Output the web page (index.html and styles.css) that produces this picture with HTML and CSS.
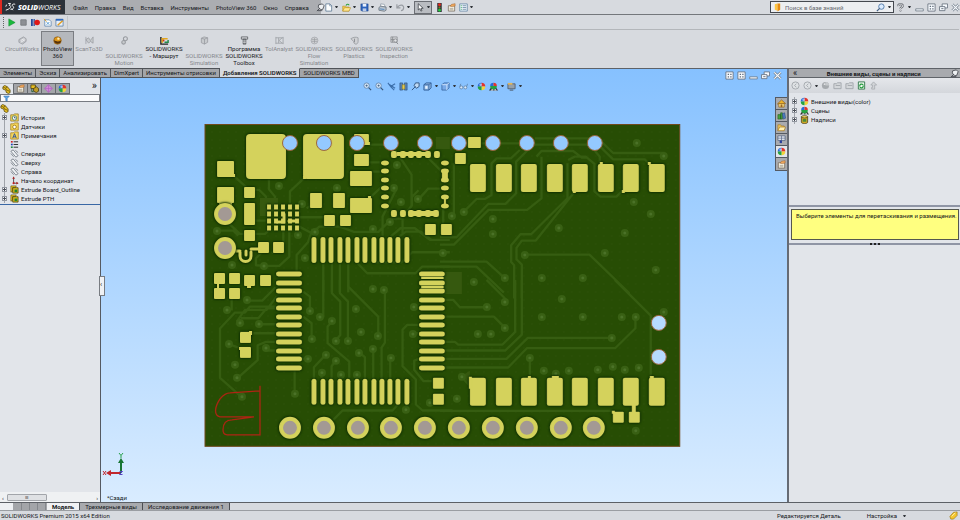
FILE: index.html
```
<!DOCTYPE html>
<html lang="ru">
<head>
<meta charset="utf-8">
<title>SOLIDWORKS</title>
<link rel="stylesheet" href="styles.css">
</head>
<body>
<svg class="sprite" aria-hidden="true">
  <symbol id="play" viewBox="0 0 10 10"><path d="M2 1l7 4-7 4z" fill="#18b83a" stroke="#0c8a2a" stroke-width=".6"/></symbol>
  <symbol id="stop" viewBox="0 0 10 10"><path d="M2 2h6v6H2z" fill="#8c8f94" stroke="#777a80"/></symbol>
  <symbol id="rec" viewBox="0 0 10 10"><path d="M0 1h2v8H0zM2.800 1h1.400v8H2.800z" fill="#254a9c"/><circle cx="6.800" cy="5" r="3.100" fill="#e01818"/></symbol>
  <symbol id="macro-new" viewBox="0 0 10 10"><path d="M2 2h5l2 2v5H2z" fill="#fff" stroke="#4c7aa8" stroke-width=".8"/><path d="M4 4.500l3 3M7 4.500l-3 3" stroke="#4793d0"/><path d="M1 1l3 3" stroke="#e0a020"/></symbol>
  <symbol id="macro-edit" viewBox="0 0 10 10"><path d="M1 1.500h8v7.500H1z" fill="#e8f0fa" stroke="#52759e" stroke-width=".8"/><path d="M1 1h8v2H1z" fill="#2f6bbf"/><path d="M3 8l5.500-5" stroke="#e39b1c" stroke-width="1.600"/></symbol>
  <symbol id="page" viewBox="0 0 10 10"><path d="M2 1h4.500L8.500 3v6H2z" fill="#fdfefe" stroke="#52708d" stroke-width=".8"/><path d="M6.300 1v2.200h2.200" fill="none" stroke="#52708d" stroke-width=".6"/></symbol>
  <symbol id="open" viewBox="0 0 10 10"><path d="M.8 9V3.500h3l1 1h3V9z" fill="#f4cd52" stroke="#b48716" stroke-width=".6"/><path d="M.8 9l2-3.800h6.800L7.800 9z" fill="#ffe791" stroke="#b48716" stroke-width=".6"/><path d="M4.500 3C5 1 7 1 8 2.500" fill="none" stroke="#2ba13c" stroke-width="1.200"/></symbol>
  <symbol id="save" viewBox="0 0 10 10"><path d="M1 1h8v8H2L1 8z" fill="#2c63bd" stroke="#1c4388" stroke-width=".6"/><path d="M3 1h4v3H3z" fill="#e9f0fc"/><path d="M3 6h4v3H3z" fill="#bccbe6"/></symbol>
  <symbol id="print" viewBox="0 0 10 10"><path d="M3 1l4 .5 1 3-5-.5z" fill="#fff" stroke="#6a7b8c" stroke-width=".6"/><path d="M1 5l2-1.500 6 1V8L7 9.200 1 8z" fill="#b8c2cc" stroke="#56616d" stroke-width=".7"/><path d="M2 6.500l5 .7" stroke="#3379c0" stroke-width=".8"/></symbol>
  <symbol id="undo" viewBox="0 0 10 10"><path d="M1 1.500v4h4M1.500 5C4 1 9 2 8.500 5.500c-.3 2-2 3-3 3" fill="none" stroke="#989ca2" stroke-width="1.300"/></symbol>
  <symbol id="cursor" viewBox="0 0 10 10"><path d="M2.500.8v7l1.800-1.500L5.500 9l1.200-.6-1.200-2.500H8z" fill="#fff" stroke="#30343a" stroke-width=".8"/></symbol>
  <symbol id="light" viewBox="0 0 10 10"><path d="M2.500 0h5v10h-5z" fill="#30343a"/><circle cx="5" cy="2" r="1.600" fill="#e32b22"/><circle cx="5" cy="5" r="1.200" fill="#8b7a19"/><circle cx="5" cy="8" r="1.600" fill="#22c63b"/></symbol>
  <symbol id="props" viewBox="0 0 10 10"><path d="M1.500 3h7v6h-7z" fill="#f4f0e2" stroke="#716657" stroke-width=".8"/><path d="M3 6h4M3 7.500h4" stroke="#857c70" stroke-width=".6"/><path d="M3.500 3.500l1.500-2 4-.8v2.500L6 4z" fill="#eeaa60" stroke="#9d5a25" stroke-width=".5"/></symbol>
  <symbol id="options" viewBox="0 0 10 10"><path d="M.8 1h8.400v8H.8z" fill="#edf5fb" stroke="#577d9f" stroke-width=".8"/><path d="M4 3h4M4 5h4M4 7h4" stroke="#47698a" stroke-width=".7"/><path d="M2 3h1M2 5h1M2 7h1" stroke="#25a348"/></symbol>
  <symbol id="pin" viewBox="0 0 10 10"><path d="M3 2l4-1 2 2-1.500 4-2 .5L2.500 4.500z" fill="#eef0f2" stroke="#30343a" stroke-width=".8"/><path d="M1 9l3-3M2 8.500h5" stroke="#30343a" stroke-width=".8"/></symbol>
  <symbol id="book" viewBox="0 0 10 10"><path d="M2 1.500l3-1v8l-3-1z" fill="#ffc640"/><path d="M5 .5h3v7l-3 2z" fill="#e58b12"/></symbol>
  <symbol id="lens" viewBox="0 0 10 10"><circle cx="6" cy="4" r="3" fill="#dcecff" stroke="#4f78a8"/><path d="M4 6L1 9" stroke="#435f83" stroke-width="1.400"/></symbol>
  <symbol id="help" viewBox="0 0 10 10"><path d="M2.500 3.500C2 .5 8 .5 7.500 3.500 7.200 5 5 4.500 5 6.500" fill="none" stroke="#62676f" stroke-width="2.400"/><path d="M2.500 3.500C2 .5 8 .5 7.500 3.500 7.200 5 5 4.500 5 6.500" fill="none" stroke="#fff" stroke-width=".9"/><circle cx="5" cy="8.500" r=".9" fill="#fff" stroke="#62676f" stroke-width=".6"/></symbol>
  <symbol id="w-min" viewBox="0 0 10 10"><path d="M.8 6.500h8.400v2.300H.8z" fill="#f6fafe" stroke="#626c79" stroke-width=".8"/></symbol>
  <symbol id="w-tile" viewBox="0 0 10 10"><path d="M1 1h8v8H1z" fill="#f6fafe" stroke="#626c79" stroke-width=".9"/><path d="M3 3h1.500v1.500H3zM5.800 3h1.500v1.500H5.800zM3 5.800h1.500v1.500H3zM5.800 5.800h1.500v1.500H5.800z" fill="#626c79"/></symbol>
  <symbol id="w-restore" viewBox="0 0 10 10"><path d="M3.500 1h6v4.500h-6z" fill="#f6fafe" stroke="#626c79" stroke-width=".9"/><path d="M.6 4h6v4.500h-6z" fill="#f6fafe" stroke="#626c79" stroke-width=".9"/><path d="M2.500 6.300h2.500" stroke="#626c79"/></symbol>
  <symbol id="w-close" viewBox="0 0 10 10"><path d="M1.500 1.500l7 7M8.500 1.500l-7 7" stroke="#727c89" stroke-width="2.800"/><path d="M1.500 1.500l7 7M8.500 1.500l-7 7" stroke="#f6fafe" stroke-width="1.400"/></symbol>
  <symbol id="ball" viewBox="0 0 10 10"><path d="M5 5V.8A4.200 4.200 0 0 0 .8 5z" fill="#2869d8"/><path d="M5 5V.8A4.200 4.200 0 0 1 9.200 5z" fill="#e2342c"/><path d="M5 5v4.200A4.200 4.200 0 0 0 9.200 5z" fill="#f1d438"/><path d="M5 5v4.200A4.200 4.200 0 0 1 .8 5z" fill="#25a241"/><circle cx="4" cy="3" r="1.400" fill="#fff" opacity=".55"/></symbol>
  <symbol id="ball-scene" viewBox="0 0 10 10"><path d="M0 9.500l2-3h6l2 3z" fill="#333"/><path d="M2 9.500l1-1.500h2l-.5 1.500zM6 9.500V8h1.500l1 1.500z" fill="#eee"/><path d="M5 4.500V.8A3.700 3.700 0 0 0 1.300 4.500z" fill="#2869d8"/><path d="M5 4.500V.8a3.700 3.700 0 0 1 3.700 3.700z" fill="#e2342c"/><path d="M1.300 4.500a3.700 3.700 0 0 0 7.400 0z" fill="#25a241"/></symbol>
  <symbol id="decal" viewBox="0 0 10 10"><path d="M1.500 2v6c0 2 7 2 7 0V2z" fill="#d4a925" stroke="#3e3412" stroke-width=".8"/><ellipse cx="5" cy="2" rx="3.500" ry="1.300" fill="#f7dc63" stroke="#3e3412" stroke-width=".8"/><path d="M3 4.500h4v3H3z" fill="#4b8b38"/></symbol>
  <symbol id="goldball" viewBox="0 0 10 10"><circle cx="5" cy="5" r="4.200" fill="#dd9616" stroke="#744307" stroke-width=".6"/><path d="M1 4.500c3 2 5 2 8 .5-.5 5-7.500 5-8-.5z" fill="#553009"/><circle cx="6" cy="3" r="1.300" fill="#ffeab0"/></symbol>
  <symbol id="g-circuit" viewBox="0 0 10 10"><path d="M1 4l5-3 3 2v3L5 9 1 7z" fill="#bfc2c6" stroke="#94979c" stroke-width=".8"/><path d="M3 5l4-2M3 7l5-3" stroke="#f1f2f4"/></symbol>
  <symbol id="g-scan" viewBox="0 0 10 10"><path d="M1 1v8M1 4l3-2 2 3 3-4v7L6 6 4 8z" fill="#c7cacd" stroke="#989ba0" stroke-width=".8"/></symbol>
  <symbol id="g-motion" viewBox="0 0 10 10"><circle cx="6" cy="3" r="2.200" fill="none" stroke="#989ba0" stroke-width="1.200"/><circle cx="4" cy="7" r="2" fill="#c7cacd" stroke="#989ba0" stroke-width="1.200"/></symbol>
  <symbol id="route" viewBox="0 0 10 10"><path d="M1 1v8h8" fill="none" stroke="#222" stroke-width="1.600"/><path d="M2.500 7.500V3h6" fill="none" stroke="#e3a71e" stroke-width="1.800"/><path d="M5 7h4V4.500" fill="none" stroke="#22894a" stroke-width="1.600"/><circle cx="4" cy="5" r="1" fill="#c93222"/></symbol>
  <symbol id="g-cube" viewBox="0 0 10 10"><path d="M1.500 2.500l3-1.500 4 1v5L5 9 1.500 7.500z" fill="#c7cacd" stroke="#94979c" stroke-width=".8"/><path d="M5 3.500V9M1.500 2.500l3.500 1 3.500-1.500" fill="none" stroke="#94979c" stroke-width=".8"/></symbol>
  <symbol id="bolt" viewBox="0 0 10 10"><path d="M1.500 1h7v2.500h-7z" fill="#d8dade" stroke="#4c4f54" stroke-width=".8"/><path d="M3.500 3.500h3V9h-3z" fill="#8c9095" stroke="#4c4f54" stroke-width=".8"/><path d="M3.500 5.500h3M3.500 7.200h3" stroke="#eee" stroke-width=".6"/></symbol>
  <symbol id="g-tol" viewBox="0 0 10 10"><path d="M1 1v8M9 1v8M1 2h8M1 8h8M4 2v6M8 2L4.500 5 8 8" fill="none" stroke="#a2a5aa"/></symbol>
  <symbol id="g-flow" viewBox="0 0 10 10"><circle cx="5" cy="5" r="3.800" fill="#cfd1d4" stroke="#a2a5aa" stroke-width=".8"/><path d="M2 4h6M2 6h6M5 2v6" stroke="#96999e" stroke-width=".7"/></symbol>
  <symbol id="g-plastic" viewBox="0 0 10 10"><path d="M1 3c3-2 6-2 8-1v4c0 4-5 4-5 0z" fill="#cfd1d4" stroke="#96999e" stroke-width=".9"/><path d="M5 3v4" stroke="#888b90"/></symbol>
  <symbol id="g-inspect" viewBox="0 0 10 10"><path d="M1 1h7v6H1z" fill="#cfd1d4" stroke="#888b90" stroke-width=".8"/><path d="M3 1v6M1 4h7M5 5l4 4" stroke="#888b90"/><circle cx="6" cy="5" r="1.800" fill="#e2e4e6" stroke="#888b90" stroke-width=".8"/></symbol>
  <symbol id="part" viewBox="0 0 10 10"><path d="M1 2l2-1.500L6 2l3 3.500v3L7 9.500 4.500 8V6L1 4.500z" fill="#e5bd22" stroke="#51420a" stroke-width=".8"/><path d="M1.200 2.200L4 3.500l1 2 3.500 1.500M4 3.500L6 2" fill="none" stroke="#51420a" stroke-width=".7"/></symbol>
  <symbol id="tag" viewBox="0 0 10 10"><path d="M1 6l4-4.500 4-.5v4L5 9H2z" fill="#f4c62c" stroke="#9a7412" stroke-width=".7"/><path d="M3 6l4-4" stroke="#fff3b5"/></symbol>
  <symbol id="config" viewBox="0 0 10 10"><path d="M1 1h5v4H1z" fill="#e5bd22" stroke="#3d330d" stroke-width=".8"/><path d="M4 5l3-2 2.500 2v3L7 9.500 4 8z" fill="#bd9b27" stroke="#3d330d" stroke-width=".8"/><path d="M2 5.500v3h2" fill="none" stroke="#235e33"/></symbol>
  <symbol id="dimx" viewBox="0 0 10 10"><path d="M5 .5L7 3l2.500 2L7 7 5 9.500 3 7 .5 5 3 3z" fill="#d28adb" stroke="#b260c2" stroke-width=".8"/><path d="M5 1v8M1 5h8" stroke="#a55fb8" stroke-width=".6"/></symbol>
  <symbol id="filter" viewBox="0 0 10 10"><path d="M1 1.500h8L6 5v4L4 8V5z" fill="#64a9e8" stroke="#2d6bb0" stroke-width=".8"/></symbol>
  <symbol id="history" viewBox="0 0 10 10"><path d="M.8 2h3l1-1h4.400v8H.8z" fill="#f5d65c" stroke="#8f7320" stroke-width=".8"/><circle cx="5" cy="5.500" r="2.500" fill="#eef6ff" stroke="#356f54" stroke-width=".8"/><path d="M5 4v1.500h1.500" fill="none" stroke="#222" stroke-width=".7"/></symbol>
  <symbol id="sensor" viewBox="0 0 10 10"><path d="M.8 2h3l1-1h4.400v8H.8z" fill="#f5d65c" stroke="#a17c16" stroke-width=".8"/><circle cx="5" cy="5.500" r="2" fill="#fff" stroke="#a17c16"/></symbol>
  <symbol id="note" viewBox="0 0 10 10"><path d="M.8 2h3l1-1h4.400v8H.8z" fill="#f5d65c" stroke="#a17c16" stroke-width=".8"/><path d="M3 8l2-5 2 5M3.700 6.500h2.600" fill="none" stroke="#234a9b"/></symbol>
  <symbol id="material" viewBox="0 0 10 10"><path d="M4 2h5M4 5h5M4 8h5" stroke="#222"/><path d="M1 2h2" stroke="#d32222" stroke-width="1.800"/><path d="M1 5h2" stroke="#2343bb" stroke-width="1.800"/><path d="M1 8h2" stroke="#22863d" stroke-width="1.800"/></symbol>
  <symbol id="plane" viewBox="0 0 10 10"><path d="M1 2.500L3.500 1 9 7.500 6.500 9z" fill="#eef1f4" stroke="#626a73" stroke-width=".8"/><path d="M6 1.500l3 2.500M1 5l3 3.500" stroke="#626a73" stroke-width=".8"/></symbol>
  <symbol id="origin" viewBox="0 0 10 10"><path d="M4 1v7h5" fill="none" stroke="#333" stroke-width=".9"/><path d="M2.500 3L4 .5 5.500 3zM7 6.500L9.500 8 7 9.500z" fill="#b02222"/><circle cx="4" cy="8" r="1.200" fill="#c32222"/></symbol>
  <symbol id="extrude" viewBox="0 0 10 10"><path d="M1 1h6l-1 2H3v4L1 8z" fill="#ebc928" stroke="#584b08" stroke-width=".7"/><path d="M3 3h6v6H3z" fill="#d9b91f" stroke="#453b07" stroke-width=".8"/><path d="M5 5h3v3H5z" fill="#23842c"/></symbol>
  <symbol id="zoomfit" viewBox="0 0 10 10"><circle cx="4" cy="4" r="3" fill="#d5e8fb" stroke="#6482a6" stroke-width=".9"/><path d="M6.300 6.300L9 9" stroke="#355578" stroke-width="1.300"/><path d="M2.800 4h2.400M4 2.800v2.400" stroke="#355578" stroke-width=".8"/></symbol>
  <symbol id="prev" viewBox="0 0 10 10"><path d="M1 1l3 4 5-3M4 5l4 4M3 3l6 4" fill="none" stroke="#3c6fab" stroke-width="1.200"/></symbol>
  <symbol id="section" viewBox="0 0 10 10"><path d="M1 1h3v8H1zM6 1h3v8H6z" fill="#5684bb" stroke="#2d4f79" stroke-width=".7"/><path d="M3.500 3h3v5h-3z" fill="#e6cb50" stroke="#796a21" stroke-width=".6"/></symbol>
  <symbol id="annot" viewBox="0 0 10 10"><path d="M1 9l4-4M5 1h4v4L6 7 3.500 4z" fill="#c0daf4" stroke="#30517a"/></symbol>
  <symbol id="cube" viewBox="0 0 10 10"><path d="M1 3l2.500-2H9v5.500L6.500 9H1z" fill="#7aaae8" stroke="#315e98" stroke-width=".8"/><path d="M1 3h5.500v6M6.500 3L9 1" fill="none" stroke="#e8f3ff" stroke-width=".8"/></symbol>
  <symbol id="orient" viewBox="0 0 10 10"><path d="M1 3l2.500-2H9v5.500L6.500 9H1z" fill="#8db4e0" stroke="#315e98"/><path d="M1 3h5.500v6M6.500 3L9 1" fill="none" stroke="#315e98" stroke-width=".8"/><path d="M2.500 4.500h2.500v3H2.500z" fill="#e8f3ff"/></symbol>
  <symbol id="glasses" viewBox="0 0 10 10"><circle cx="2.500" cy="6" r="1.700" fill="#d6e9fc" stroke="#567799" stroke-width=".8"/><circle cx="7" cy="6" r="1.700" fill="#d6e9fc" stroke="#567799" stroke-width=".8"/><path d="M1 5l1-3M8.500 5l1-3" stroke="#567799" stroke-width=".8"/></symbol>
  <symbol id="screen" viewBox="0 0 10 10"><path d="M1 2h8v5.500H1z" fill="#95a0ab" stroke="#454e59" stroke-width=".8"/><path d="M1 1h5v2H1z" fill="#e3b65a"/><path d="M3 9h4" stroke="#454e59"/></symbol>
  <symbol id="home" viewBox="0 0 10 10"><path d="M.5 5.500L5 1l4.500 4z" fill="#eeb32a" stroke="#8c5c13" stroke-width=".7"/><path d="M2 5h6v4H2z" fill="#f9dc80" stroke="#8c5c13" stroke-width=".7"/><path d="M4 6h2v3H4z" fill="#9a6321"/></symbol>
  <symbol id="library" viewBox="0 0 10 10"><path d="M1 4h3v5H1zM4 2h2v7H4z" fill="#46a03d" stroke="#225c23" stroke-width=".6"/><path d="M6 3l2.500-1L9.500 8 7 9z" fill="#4f7fc3" stroke="#234478" stroke-width=".6"/></symbol>
  <symbol id="folder" viewBox="0 0 10 10"><path d="M1 8.500V2h3l1 1.300h3v5.200z" fill="#eec75c" stroke="#a37622" stroke-width=".7"/><path d="M1 8.500L3 4.500h6.500l-1.700 4z" fill="#fff0b0" stroke="#a37622" stroke-width=".7"/></symbol>
  <symbol id="palette" viewBox="0 0 10 10"><path d="M1 1h8v5H1z" fill="#e8edf5" stroke="#4d5d7c" stroke-width=".8"/><path d="M5 1v5M1 3.500h8" stroke="#4d5d7c" stroke-width=".7"/><path d="M3 6h2.500v3H3z" fill="#283e9b"/></symbol>
  <symbol id="g-back" viewBox="0 0 10 10"><circle cx="5" cy="5" r="4" fill="#dfe2e5" stroke="#a2a6ab"/><path d="M6 3L4 5l2 2" fill="none" stroke="#a2a6ab"/></symbol>
  <symbol id="g-folder" viewBox="0 0 10 10"><path d="M1 8.500V3h3l1-1h4v6.500z" fill="#d4d7da" stroke="#a2a6ab"/><path d="M3 5h5" stroke="#a2a6ab"/></symbol>
  <symbol id="g-ball" viewBox="0 0 10 10"><circle cx="5" cy="5" r="4" fill="#a6aaae"/><path d="M5 1a4 4 0 0 1 4 4H5z" fill="#c6c9cc"/><circle cx="4" cy="3.500" r="1" fill="#e0e2e4"/></symbol>
  <symbol id="refresh" viewBox="0 0 10 10"><path d="M1.500 1h7v8h-7z" fill="#f2faf3" stroke="#2f7547"/><path d="M3 6c0-3 2-3 4-2M7 5c0 3-2 3-4 2" fill="none" stroke="#249a3e" stroke-width="1.400"/></symbol>
  <symbol id="g-up" viewBox="0 0 10 10"><path d="M5 1l3.500 3.500H6.300V9H3V7h1V4.500H2z" fill="#d2d5d8" stroke="#a2a6ab" stroke-width=".8"/></symbol>
</svg>

<header class="titlebar">
  <div class="brand"><svg viewBox="0 0 14 11" aria-hidden="true"><path d="M4 1h3L5.500 3.500C9 4 7 8 1 9.500M2 2.500L1 5M13 2c-3-1-5 1-3 2.500s1 4-3 4M8 7.500l2 2" fill="none" stroke="#fff" stroke-width="1.200"/></svg><b>SOLID</b><span>WORKS</span></div>
  <nav class="menu">
    <a href="#">Файл</a><a href="#">Правка</a><a href="#">Вид</a><a href="#">Вставка</a><a href="#">Инструменты</a><a href="#">PhotoView 360</a><a href="#">Окно</a><a href="#">Справка</a>
    <svg class="ico"><use href="#pin"/></svg>
  </nav>
  <div class="quick">
    <button aria-label="Создать"><svg class="ico"><use href="#page"/></svg><i></i></button>
    <button aria-label="Открыть"><svg class="ico"><use href="#open"/></svg><i></i></button>
    <button aria-label="Сохранить"><svg class="ico"><use href="#save"/></svg><i></i></button>
    <button aria-label="Печать"><svg class="ico"><use href="#print"/></svg><i></i></button>
    <button aria-label="Отменить"><svg class="ico"><use href="#undo"/></svg><i></i></button>
    <button class="picked" aria-label="Выбрать"><svg class="ico"><use href="#cursor"/></svg><i></i></button>
    <button aria-label="Перестроить"><svg class="ico"><use href="#light"/></svg></button>
    <button aria-label="Свойства"><svg class="ico"><use href="#props"/></svg></button>
    <button aria-label="Параметры"><svg class="ico"><use href="#options"/></svg><i></i></button>
  </div>
  <div class="search"><svg class="ico"><use href="#book"/></svg><input type="search" aria-label="Поиск" placeholder="Поиск в базе знаний"><button aria-label="Найти"><svg class="ico"><use href="#lens"/></svg><i></i></button></div>
  <div class="window">
    <button aria-label="Справка"><svg class="ico"><use href="#help"/></svg><i></i></button>
    <button aria-label="Свернуть"><svg class="ico"><use href="#w-min"/></svg></button>
    <button aria-label="Мозаика"><svg class="ico"><use href="#w-tile"/></svg></button>
    <button aria-label="Восстановить"><svg class="ico"><use href="#w-restore"/></svg></button>
    <button aria-label="Закрыть"><svg class="ico"><use href="#w-close"/></svg></button>
  </div>
</header>

<div class="macros">
  <button aria-label="Выполнить"><svg class="ico"><use href="#play"/></svg></button>
  <button aria-label="Стоп"><svg class="ico"><use href="#stop"/></svg></button>
  <button aria-label="Запись"><svg class="ico"><use href="#rec"/></svg></button>
  <button aria-label="Новый макрос"><svg class="ico"><use href="#macro-new"/></svg></button>
  <button aria-label="Правка макроса"><svg class="ico"><use href="#macro-edit"/></svg></button>
</div>

<div class="ribbon">
  <button class="wide off"><svg class="ico"><use href="#g-circuit"/></svg>CircuitWorks</button>
  <button class="on"><svg class="ico"><use href="#goldball"/></svg>PhotoView<br>360</button>
  <button class="narrow off"><svg class="ico"><use href="#g-scan"/></svg>ScanTo3D</button>
  <button class="off low"><svg class="ico"><use href="#g-motion"/></svg>SOLIDWORKS<br>Motion</button>
  <button><svg class="ico"><use href="#route"/></svg>SOLIDWORKS<br>- Маршрут</button>
  <button class="off low"><svg class="ico"><use href="#g-cube"/></svg>SOLIDWORKS<br>Simulation</button>
  <button><svg class="ico"><use href="#bolt"/></svg>Программа<br>SOLIDWORKS<br>Toolbox</button>
  <button class="narrow off"><svg class="ico"><use href="#g-tol"/></svg>TolAnalyst</button>
  <button class="off"><svg class="ico"><use href="#g-flow"/></svg>SOLIDWORKS<br>Flow<br>Simulation</button>
  <button class="off"><svg class="ico"><use href="#g-plastic"/></svg>SOLIDWORKS<br>Plastics</button>
  <button class="off"><svg class="ico"><use href="#g-inspect"/></svg>SOLIDWORKS<br>Inspection</button>
</div>

<main class="work">
  <nav class="tabs">
    <button>Элементы</button><button>Эскиз</button><button>Анализировать</button><button>DimXpert</button><button>Инструменты отрисовки</button><button class="active">Добавления SOLIDWORKS</button><button>SOLIDWORKS MBD</button>
  </nav>

  <aside class="features">
    <div class="ftabs">
      <button class="active" aria-label="Дерево"><svg class="ico"><use href="#part"/></svg></button>
      <button aria-label="Свойства"><svg class="ico"><use href="#props"/></svg></button>
      <button aria-label="Конфигурации"><svg class="ico"><use href="#config"/></svg></button>
      <button aria-label="DimXpert"><svg class="ico"><use href="#dimx"/></svg></button>
      <button aria-label="Отображение"><svg class="ico"><use href="#ball"/></svg></button>
      <span>»</span>
    </div>
    <label class="filter"><svg class="ico"><use href="#filter"/></svg><input aria-label="Фильтр"></label>
    <ul class="tree">
      <li class="root"><svg class="ico"><use href="#part"/></svg></li>
      <li><b class="plus"></b><svg class="ico"><use href="#history"/></svg>История</li>
      <li><b></b><svg class="ico"><use href="#sensor"/></svg>Датчики</li>
      <li><b class="plus"></b><svg class="ico"><use href="#note"/></svg>Примечания</li>
      <li><b></b><svg class="ico"><use href="#material"/></svg></li>
      <li><b></b><svg class="ico"><use href="#plane"/></svg>Спереди</li>
      <li><b></b><svg class="ico"><use href="#plane"/></svg>Сверху</li>
      <li><b></b><svg class="ico"><use href="#plane"/></svg>Справа</li>
      <li><b></b><svg class="ico"><use href="#origin"/></svg>Начало координат</li>
      <li><b class="plus"></b><svg class="ico"><use href="#extrude"/></svg>Extrude Board_Outline</li>
      <li><b class="plus"></b><svg class="ico"><use href="#extrude"/></svg>Extrude PTH</li>
    </ul>
    <div class="hscroll"><span>‹</span><div class="thumb">III</div><span>›</span></div>
    <div class="handle">‹</div>
  </aside>

  <section class="viewport">
    <div class="view-head">
      <div class="view-tools">
        <svg class="ico"><use href="#zoomfit"/></svg><svg class="ico"><use href="#zoomfit"/></svg><svg class="ico"><use href="#prev"/></svg><svg class="ico"><use href="#section"/></svg><svg class="ico"><use href="#annot"/></svg><svg class="ico"><use href="#orient"/></svg><i></i><svg class="ico"><use href="#cube"/></svg><i></i><svg class="ico"><use href="#glasses"/></svg><i></i><svg class="ico"><use href="#ball"/></svg><svg class="ico"><use href="#ball-scene"/></svg><i></i><svg class="ico"><use href="#screen"/></svg><i></i>
      </div>
      <div class="view-win">
        <svg class="ico"><use href="#w-tile"/></svg><svg class="ico"><use href="#w-tile"/></svg><svg class="ico"><use href="#w-min"/></svg><svg class="ico"><use href="#w-restore"/></svg><svg class="ico"><use href="#w-close"/></svg>
      </div>
    </div>
    <svg class="board" viewBox="204 124 477 323" role="img" aria-label="Печатная плата">
      <defs>
        <pattern id="mesh" width="8" height="8" patternUnits="userSpaceOnUse"><rect width="8" height="8" fill="#274d04"/><circle cx="4" cy="4" r="1" fill="#2a5007"/></pattern>
        <g id="via"><circle r="4" fill="#396014"/><circle r="1.500" fill="#4b7228"/></g>
        <rect id="padL" width="16" height="28" rx="2"/>
        <rect id="padS" width="11" height="11" rx="1"/>
        <path id="padV" d="M0 2.500v21" stroke-width="5"/>
        <path id="padH" d="M2.500 0h21" stroke-width="5"/>
        <ellipse id="pinH" rx="4" ry="2.500"/>
        <rect id="pinV" x="-3" y="-3" width="6" height="7" rx="2"/>
      </defs>
      <rect x="205" y="124.500" width="475" height="322" fill="url(#mesh)" stroke="#70491c"/>
      <g class="traces">
        <g transform="translate(200 120) scale(.3333)">
          <path d="M98 165l50 45h30l20 20v50M207 178v30l18 22v60M315 172l-45 42v75M268 325v85l-30 28h-46M165 302h35M298 292h80M75 300l45 42h75l22-20M250 325v45l-35 30M50 332h50l15 15M190 438l-22-2V415l18-18M298 320l38 20 22-20h62l42 16h74l40-40h30l30-40v-25l20-20M518 155h40M505 127h45M505 74h70l60 90v95l-27 30v55M658 236l27-30h50M676 105l50 50M290 455v-50l34-38 14-40M320 265l20-12M508 235l45-42M410 215v-10M370 427v90M396 427v90M420 427v90M445 427v90M470 427l32 33h145l20-20h83M520 427h85l32-30h113M548 350v-60l40-80M572 350l30-25h43l45 35h60M598 350l20-15h45l32 25h55M690 345v-35"/>
        </g>
        <g transform="translate(440 120) scale(.3333)">
          <path d="M240 90l-27 25h-43l-15 15v95l-20 12h-25l-38 38M264 90l-35 35v95l-32 32h-52l-95 100H0M290 110l15-17h95l26 20h15M305 110v125l-43 35H146L42 374H0M285 74h190l45 44h95l13 14M285 55h190l45 44h155M480 130v-20l-15-18M385 120l20-10h33l26 22v82l18 16h48l18-18M383 130v105L274 343h-32l-28 33v50l9 10v100M404 216L288 362h-42l-16 22v34l16 16v100M254 404h195l120 116M0 425h140l55 50M0 440h110l82 78M42 130v155M100 70h140M10 250v70"/>
        </g>
        <g transform="translate(200 280) scale(.3333)">
          <path d="M370 0v113M396 0v40l25 25v100l-15 18M420 0v40l24 25v118M445 0v20l90 90v55M555 30v158l-10 15v95M310 35l20 15v42M310 110l25 20v48M230 50l-30 40h-65l-25 35M230 80h-80l-15 18h-30l-45 48v148l65 58M230 85h-30l-25 30H122M230 133h-53M154 160h78M230 186h-32l-25 10v45l-62 55M230 212h-35M120 205l-34-12M142 62h45l40-40M95 92V55M308 237h15M284 270v72M397 125l-14 15v50l65 55v50M342 297v-35l35-37M395 297v-38l12-16M495 297v-65l-17-14M520 297v-88M571 297v-63M365 295v-15M420 297v-12M657 135h-35l-14 14v110l40 40v75l20 18h90M655 160h-18M657 85h-15M657 237l-14 5v28l28 34h27M400 420l28-28h150l16-18M620 375v15M690 368h10"/>
        </g>
        <g transform="translate(440 280) scale(.3333)">
          <path d="M0 60h40l20 22h80M0 110h162l33 33M0 186h45l10 8h133l38-38V0M0 212h196l50-48V0M0 237h200l64-63h250M0 263h205l56-58h265l61-60v-33M525 0l108 107v185M140 0l55 55v13M270 234v60M0 393h515l8 8M65 290l28 32M582 380v18M346 280v14"/>
        </g>
      </g>
      <g class="patches"><path d="M440 272h22v22h-22zM436 137h14v12h-14zM260 198h18v18h-18zM462 376l8-5v14z"/></g>
      <g>
        <use href="#via" x="279" y="186"/><use href="#via" x="337" y="188"/><use href="#via" x="397" y="165"/><use href="#via" x="394" y="188"/><use href="#via" x="401" y="202"/><use href="#via" x="418" y="199"/><use href="#via" x="390" y="222"/><use href="#via" x="373" y="229"/><use href="#via" x="315" y="232"/><use href="#via" x="298" y="235"/><use href="#via" x="302" y="204"/><use href="#via" x="217" y="231"/><use href="#via" x="232" y="265"/><use href="#via" x="264" y="266"/><use href="#via" x="305" y="258"/><use href="#via" x="443" y="253"/>
        <use href="#via" x="637" y="143"/><use href="#via" x="664" y="156"/><use href="#via" x="634" y="202"/><use href="#via" x="651" y="214"/><use href="#via" x="559" y="228"/><use href="#via" x="625" y="233"/><use href="#via" x="493" y="219"/><use href="#via" x="493" y="234"/><use href="#via" x="464" y="212"/><use href="#via" x="452" y="216"/><use href="#via" x="525" y="255"/><use href="#via" x="605" y="253"/><use href="#via" x="656" y="270"/><use href="#via" x="474" y="282"/><use href="#via" x="505" y="278"/><use href="#via" x="542" y="278"/><use href="#via" x="583" y="278"/>
        <use href="#via" x="227" y="310"/><use href="#via" x="240" y="323"/><use href="#via" x="259" y="324"/><use href="#via" x="247" y="300"/><use href="#via" x="229" y="344"/><use href="#via" x="266" y="348"/><use href="#via" x="235" y="365"/><use href="#via" x="237" y="378"/><use href="#via" x="242" y="397"/><use href="#via" x="295" y="394"/><use href="#via" x="308" y="359"/><use href="#via" x="310" y="311"/><use href="#via" x="312" y="339"/><use href="#via" x="320" y="317"/><use href="#via" x="332" y="321"/><use href="#via" x="336" y="341"/><use href="#via" x="348" y="341"/><use href="#via" x="356" y="309"/><use href="#via" x="361" y="332"/><use href="#via" x="378" y="336"/><use href="#via" x="373" y="289"/><use href="#via" x="384" y="290"/><use href="#via" x="326" y="355"/><use href="#via" x="336" y="361"/><use href="#via" x="359" y="353"/><use href="#via" x="373" y="349"/><use href="#via" x="391" y="358"/><use href="#via" x="322" y="373"/><use href="#via" x="341" y="375"/><use href="#via" x="357" y="375"/><use href="#via" x="406" y="410"/><use href="#via" x="413" y="334"/><use href="#via" x="414" y="307"/><use href="#via" x="430" y="403"/>
        <use href="#via" x="487" y="307"/><use href="#via" x="505" y="302"/><use href="#via" x="562" y="299"/><use href="#via" x="542" y="317"/><use href="#via" x="583" y="317"/><use href="#via" x="622" y="317"/><use href="#via" x="636" y="317"/><use href="#via" x="664" y="312"/><use href="#via" x="505" y="328"/><use href="#via" x="478" y="334"/><use href="#via" x="491" y="334"/><use href="#via" x="612" y="338"/><use href="#via" x="530" y="358"/><use href="#via" x="544" y="371"/><use href="#via" x="556" y="374"/><use href="#via" x="569" y="371"/><use href="#via" x="598" y="370"/><use href="#via" x="613" y="367"/><use href="#via" x="625" y="370"/><use href="#via" x="639" y="368"/><use href="#via" x="462" y="377"/><use href="#via" x="457" y="399"/><use href="#via" x="636" y="431"/>
      </g>
      <g class="pads">
        <rect x="246" y="134" width="40" height="45" rx="4"/><rect x="303" y="134" width="41" height="45" rx="4"/>
        <rect x="354" y="134" width="15" height="11" rx="1"/><rect x="217" y="161" width="17" height="16" rx="1"/><rect x="217" y="187" width="17" height="16" rx="1"/><path d="M219 203h13v6h-13z"/>
        <rect x="244" y="187" width="11" height="11" rx="1"/><rect x="244" y="203" width="11" height="22" rx="1"/><rect x="244" y="230" width="11" height="11" rx="1"/>
        <rect x="354" y="154" width="15" height="12" rx="1"/><rect x="350" y="171" width="22" height="15" rx="1"/><rect x="350" y="198" width="22" height="15" rx="1"/>
        <rect x="310" y="193" width="12" height="15" rx="1"/><rect x="333" y="193" width="12" height="15" rx="1"/>
        <use href="#padS" x="324" y="215"/><use href="#padS" x="340" y="215"/><use href="#padS" x="258" y="242"/><use href="#padS" x="273" y="242"/>
        <use href="#padS" x="425" y="224"/><use href="#padS" x="441" y="224"/><use href="#padS" x="455" y="153"/><rect x="468" y="137" width="13" height="11" rx="1"/>
        <use href="#padS" x="214" y="273"/><use href="#padS" x="229" y="273"/><use href="#padS" x="244" y="275"/><use href="#padS" x="260" y="275"/><use href="#padS" x="214" y="288"/><use href="#padS" x="229" y="288"/>
        <use href="#padS" x="240" y="332"/><use href="#padS" x="240" y="347"/><use href="#padS" x="433" y="378"/><use href="#padS" x="433" y="394"/><use href="#padS" x="613" y="412"/><use href="#padS" x="629" y="412"/>
        <use href="#padL" x="470" y="164"/><use href="#padL" x="496" y="164"/><use href="#padL" x="521" y="164"/><use href="#padL" x="547" y="164"/><use href="#padL" x="572" y="164"/><use href="#padL" x="598" y="164"/><use href="#padL" x="623" y="164"/><use href="#padL" x="649" y="164"/>
        <use href="#padL" x="470" y="378"/><use href="#padL" x="496" y="378"/><use href="#padL" x="521" y="378"/><use href="#padL" x="547" y="378"/><use href="#padL" x="572" y="378"/><use href="#padL" x="598" y="378"/><use href="#padL" x="623" y="378"/><use href="#padL" x="649" y="378"/>
        <use href="#pinV" x="394" y="154"/><use href="#pinV" x="403" y="154"/><use href="#pinV" x="411" y="154"/><use href="#pinV" x="419" y="154"/><use href="#pinV" x="428" y="154"/><use href="#pinV" x="437" y="154"/>
        <use href="#pinV" x="394" y="213"/><use href="#pinV" x="403" y="213"/><use href="#pinV" x="411" y="213"/><use href="#pinV" x="419" y="213"/><use href="#pinV" x="428" y="213"/><use href="#pinV" x="436" y="213"/><path d="M410 211h28v5h-28zM397 152h30v4h-30z"/>
        <use href="#pinH" x="385" y="163"/><use href="#pinH" x="385" y="171"/><use href="#pinH" x="385" y="180"/><use href="#pinH" x="385" y="188"/><use href="#pinH" x="385" y="197"/><use href="#pinH" x="385" y="206"/>
        <use href="#pinH" x="445" y="163"/><use href="#pinH" x="445" y="171"/><use href="#pinH" x="445" y="180"/><use href="#pinH" x="445" y="188"/><use href="#pinH" x="445" y="197"/><use href="#pinH" x="445" y="206"/><path d="M442 171h6v9h-6zM444 197h2v9h-2z"/>
        <path d="M231 174h4v3h-4zM367 142h3v3h-3zM303 176h3v3h-3zM600 162h3v3h-3zM648 162h3v3h-3zM573 190h3v3h-3zM622 190h3v3h-3zM528 376h3v3h-3zM552 376h7v3h-7zM650 376h4v3h-4zM469 377h3v12h-3zM632 405h4v8h-4zM612 411h3v3h-3zM249 331h3v4h-3zM239 347h3v3h-3zM217 283h2v6h-2zM247 285h4v3h-4zM368 196h3v3h-3z"/>
        <g class="lines">
          <use href="#padV" x="314" y="237"/><use href="#padV" x="323" y="237"/><use href="#padV" x="331" y="237"/><use href="#padV" x="340" y="237"/><use href="#padV" x="348" y="237"/><use href="#padV" x="357" y="237"/><use href="#padV" x="365" y="237"/><use href="#padV" x="374" y="237"/><use href="#padV" x="382" y="237"/><use href="#padV" x="390" y="237"/><use href="#padV" x="398" y="237"/><use href="#padV" x="407" y="237"/>
          <use href="#padV" x="314" y="379"/><use href="#padV" x="323" y="379"/><use href="#padV" x="331" y="379"/><use href="#padV" x="340" y="379"/><use href="#padV" x="348" y="379"/><use href="#padV" x="357" y="379"/><use href="#padV" x="365" y="379"/><use href="#padV" x="374" y="379"/><use href="#padV" x="382" y="379"/><use href="#padV" x="390" y="379"/><use href="#padV" x="398" y="379"/><use href="#padV" x="407" y="379"/>
          <use href="#padH" x="276" y="274"/><use href="#padH" x="276" y="283"/><use href="#padH" x="276" y="291"/><use href="#padH" x="276" y="300"/><use href="#padH" x="276" y="308"/><use href="#padH" x="276" y="317"/><use href="#padH" x="276" y="325"/><use href="#padH" x="276" y="334"/><use href="#padH" x="276" y="342"/><use href="#padH" x="276" y="351"/><use href="#padH" x="276" y="359"/><use href="#padH" x="276" y="368"/>
          <use href="#padH" x="419" y="274"/><use href="#padH" x="419" y="283"/><use href="#padH" x="419" y="291"/><use href="#padH" x="419" y="300"/><use href="#padH" x="419" y="308"/><use href="#padH" x="419" y="317"/><use href="#padH" x="419" y="325"/><use href="#padH" x="419" y="334"/><use href="#padH" x="419" y="342"/><use href="#padH" x="419" y="351"/><use href="#padH" x="419" y="359"/><use href="#padH" x="419" y="368"/>
          <path d="M422 278h21M422 287h21" stroke-width="2"/>
          <path d="M240 252v4a5.500 5.500 0 0 0 11 0v-4M246 251v4M235 251h5M251 249h8" stroke-width="3"/>
          <path class="dots" d="M267 207h32M267 214h32M267 221h32M267 228h32" stroke-width="5"/>
          <path d="M289 221h8M277 222h7v-8" stroke-width="3"/>
        </g>
      </g>
      <g class="rings">
        <circle cx="225" cy="214" r="9"/><circle cx="225" cy="248" r="9"/><circle cx="290" cy="428" r="9"/><circle cx="324" cy="428" r="9"/><circle cx="358" cy="428" r="9"/><circle cx="391" cy="428" r="9"/><circle cx="425" cy="428" r="9"/><circle cx="459" cy="428" r="9"/><circle cx="493" cy="428" r="9"/><circle cx="527" cy="428" r="9"/><circle cx="561" cy="428" r="9"/><circle cx="594" cy="428" r="9"/>
      </g>
      <g class="holes">
        <circle cx="290" cy="143" r="7.500"/><circle cx="324" cy="143" r="7.500"/><circle cx="357" cy="143" r="7.500"/><circle cx="391" cy="143" r="7.500"/><circle cx="425" cy="143" r="7.500"/><circle cx="459" cy="143" r="7.500"/><circle cx="493" cy="143" r="7.500"/><circle cx="527" cy="143" r="7.500"/><circle cx="561" cy="143" r="7.500"/><circle cx="595" cy="143" r="7.500"/>
        <circle class="low" cx="659" cy="323" r="7.500"/><circle class="low" cx="659" cy="357" r="7.500"/>
      </g>
      <path d="M260 386v49h-33q-4 0-4-5 0-10 9-10l22-3h-34c-6-1-6-9 0-18q5-6 10-6l30-2" fill="none" stroke="#b02414" stroke-width="1.300"/>
    </svg>
    <svg class="triad" viewBox="0 0 24 26" aria-hidden="true"><path d="M19 20V8" stroke="#177533" stroke-width="2"/><path d="M16 10l3-5 3 5z" fill="#177533"/><path d="M18 20H7" stroke="#c1272d" stroke-width="2"/><path d="M9 17l-5 3 5 3z" fill="#c1272d"/><path d="M17 0l2 2.500L21 0M19 2.500V5" stroke="#25a04a" fill="none"/><path d="M1 18l3 4M4 18l-3 4" stroke="#c1272d"/><path d="M17.500 18.500h3l-3 3h3" fill="none" stroke="#5544c0"/></svg>
    <div class="view-name">*Сзади</div>
    <div class="task-tabs">
      <button aria-label="Ресурсы"><svg class="ico"><use href="#home"/></svg></button>
      <button aria-label="Библиотека"><svg class="ico"><use href="#library"/></svg></button>
      <button aria-label="Проводник"><svg class="ico"><use href="#folder"/></svg></button>
      <button aria-label="Палитра видов"><svg class="ico"><use href="#palette"/></svg></button>
      <button class="active" aria-label="Внешние виды"><svg class="ico"><use href="#ball"/></svg></button>
      <button aria-label="Свойства"><svg class="ico"><use href="#props"/></svg></button>
    </div>
  </section>

  <aside class="task">
    <h2><span>«</span><strong>Внешние виды, сцены и надписи</strong><svg class="ico"><use href="#pin"/></svg></h2>
    <div class="task-tools"><svg class="ico"><use href="#g-back"/></svg><svg class="ico"><use href="#g-back"/></svg><i></i><svg class="ico"><use href="#g-ball"/></svg><svg class="ico"><use href="#g-folder"/></svg><svg class="ico"><use href="#g-folder"/></svg><svg class="ico"><use href="#refresh"/></svg><svg class="ico"><use href="#g-up"/></svg></div>
    <ul class="tree">
      <li><b class="plus"></b><svg class="ico"><use href="#ball"/></svg>Внешние виды(color)</li>
      <li><b class="plus"></b><svg class="ico"><use href="#ball-scene"/></svg>Сцены</li>
      <li><b class="plus"></b><svg class="ico"><use href="#decal"/></svg>Надписи</li>
    </ul>
    <p class="hint">Выберите элементы для перетаскивания и размещения.</p>
    <div class="split"><i></i><i></i><i></i></div>
    <div class="preview"></div>
  </aside>
</main>

<nav class="sheets">
  <span class="steps"><i></i><i></i><i></i><i></i></span>
  <button class="active">Модель</button><button>Трехмерные виды</button><button>Исследование движения 1</button>
</nav>
<footer class="status"><span>SOLIDWORKS Premium 2015 x64 Edition</span><span class="mode">Редактируется Деталь</span><span class="unit">Настройка</span><i></i><svg class="ico"><use href="#tag"/></svg></footer>
</body>
</html>
```
FILE: styles.css
```
*, *::before, *::after { box-sizing: border-box; }
body {
  margin: 0;
  height: 100vh;
  display: flex;
  flex-direction: column;
  overflow: hidden;
  background: #d7dadf;
  color: #15171a;
  font: 6px/9px Roboto, "Noto Sans", sans-serif;
}
button, input { font: inherit; color: inherit; margin: 0; padding: 0; border: 0; background: none; }
button { display: flex; align-items: center; justify-content: center; white-space: nowrap; }
a { color: inherit; text-decoration: none; white-space: nowrap; }
ul { list-style: none; margin: 0; padding: 0; }
.sprite { position: absolute; width: 0; height: 0; }
.ico { width: 9px; height: 9px; flex: none; display: block; }
.quick i, .search i, .window i, .view-tools i, .task-tools i, .status i {
  width: 3px;
  height: 2px;
  border: 1px solid transparent;
  border-top: 2px solid #30343a;
  border-bottom: 0;
}

.titlebar { display: flex; align-items: stretch; height: 15px; flex: none; border-bottom: 1px solid #74777c; }
.brand { display: flex; align-items: center; gap: 2px; width: 65px; padding-left: 3px; background: #2c3138; border-left: 2px solid #e02a20; color: #fff; font-family: "Open Sans", sans-serif; font-size: 7px; font-style: italic; }
.brand svg { width: 11px; height: 10px; }
.brand b { font-weight: 800; }
.brand span { margin-left: -2px; }
.menu { display: flex; align-items: center; gap: 7px; width: 256px; padding-left: 8px; background: #abadb1; }
.menu .ico { margin-left: auto; margin-right: 3px; }
.quick { display: flex; align-items: center; gap: 4px; padding-left: 3px; flex: 1; }
.quick button { gap: 2px; height: 11px; }
.quick .picked { background: #b9bcc1; border: 1px solid #6b6e74; padding: 0 1px; height: 13px; }
.quick .picked ~ button { margin-left: -1px; }
.search { display: flex; align-items: center; width: 124px; margin: 1px 0; border: 1px solid #44484f; background: #eceef1; padding: 0 2px; gap: 3px; }
.search input { flex: 1; min-width: 0; }
.search input::placeholder { color: #666a70; opacity: 1; }
.search button, .window button { gap: 3px; }
.window { display: flex; align-items: center; gap: 3px; padding-left: 2px; }
.window button:first-child { margin-right: 1px; }

.macros { display: flex; align-items: center; gap: 3px; height: 15px; flex: none; margin-right: 1px; padding-left: 3px; border-bottom: 1px solid #b3b6ba; }
.macros::before { content: ""; width: 1px; height: 11px; border-left: 1px dotted #666; }
.macros::after { content: ""; width: 1px; height: 13px; background: #c3c6ca; }

.ribbon { display: flex; align-items: flex-start; height: 38px; flex: none; padding: 1px 0 0 3px; }
.ribbon button { flex-direction: column; justify-content: flex-start; width: 40px; height: 35px; padding-top: 5px; line-height: 7px; }
.ribbon .wide { width: 38px; }
.ribbon .narrow { width: 30px; }
.ribbon .on { width: 33px; background: #b5b8bd; border: 1px solid #7a7d82; padding-top: 4px; }
.ribbon .off { color: #85888d; }
.ribbon .low .ico { margin-bottom: 7px; }

.work { position: relative; flex: 1; min-height: 0; display: grid; grid-template-columns: 101px minmax(0, 1fr) 173px; border-top: 1px solid #5e6268; }
.tabs { position: absolute; left: 0; top: -1px; display: flex; height: 10px; z-index: 2; }
.tabs button { padding: 0 3px; background: #a3a5a9; border: 1px solid #505358; border-left: 0; line-height: 8px; }
.tabs .active { background: #d7dadf; border-top-color: #d7dadf; font-weight: 600; }

.features { position: relative; display: flex; flex-direction: column; padding-top: 14px; background: #e2e5ea; border-right: 1px solid #555a62; }
.ftabs { display: flex; height: 11px; }
.ftabs button { width: 14px; background: #a3a5a9; border: 1px solid #66696e; border-left: 0; }
.ftabs .active { background: #e2e5ea; border-bottom: 0; border-top-color: #b2b5b9; }
.ftabs span { margin: -2px 3px 0 auto; font-size: 11px; }
.filter { display: flex; align-items: center; height: 8px; border: 1px solid #777b82; background: #fbfbfc; padding-left: 2px; }
.filter .ico { width: 7px; height: 7px; }
.filter input { flex: 1; min-width: 0; height: 6px; }
.tree li { display: flex; align-items: center; gap: 2px; height: 9px; white-space: nowrap; }
.tree li b { width: 7px; height: 9px; margin-right: -1px; display: grid; place-items: center start; background: linear-gradient(#a0a4aa, #a0a4aa) 2px 0 / 1px 100% no-repeat; }
.tree .plus::before { content: ""; width: 5px; height: 5px; border: 1px solid #9297a0; background: linear-gradient(#4a4f58, #4a4f58) center / 3px 1px no-repeat, linear-gradient(#4a4f58, #4a4f58) center / 1px 3px no-repeat, #f6f7f9; }
.features .tree { padding: 2px 0 1px 2px; border-bottom: 1px solid #3967a5; }
.features .root { margin-left: -2px; }
.hscroll { display: flex; align-items: center; justify-content: space-between; height: 10px; margin-top: auto; padding: 0 2px; background: #eff1f3; }
.hscroll .thumb { width: 40px; height: 7px; margin-right: auto; margin-left: 3px; border: 1px solid #a2a5aa; border-radius: 1px; background: #dfe1e4; font-size: 4px; line-height: 5px; text-align: center; }
.handle { position: absolute; right: -5px; top: 207px; width: 6px; height: 20px; border: 1px solid #787c82; background: #eff1f4; font-size: 7px; line-height: 17px; z-index: 1; }

.viewport { position: relative; display: flex; flex-direction: column; background: linear-gradient(#86c1ff, #d9ecff); }
.view-head { display: flex; align-items: center; justify-content: center; height: 34px; }
.view-tools { display: flex; align-items: center; gap: 3px; margin-right: 4px; }
.view-win { position: absolute; right: 5px; top: 2px; display: flex; gap: 3px; }
.board { width: 69.500%; margin: 21px auto 0 15%; display: block; }
.traces { fill: none; stroke: #365d11; stroke-width: 7; stroke-linejoin: round; }
.patches { fill: #36590f; }
.pads, .rings { filter: drop-shadow(0 0 1px #0c2c00) drop-shadow(0 0 1px #0c2c00); }
.pads { fill: #d4d25c; }
.lines { fill: none; stroke: #d4d25c; stroke-linecap: round; }
.dots { stroke-dasharray: 4 3; stroke-linecap: butt; }
.rings { fill: #a39994; stroke: #d4d25c; stroke-width: 4; }
.holes { fill: #94c9ff; stroke: #9c6338; stroke-width: 1; }
.holes .low { fill: #b6dbff; }
.triad { position: absolute; left: 1px; bottom: 23px; width: 24px; height: 26px; }
.view-name { position: absolute; left: 6px; bottom: 0; }
.task-tabs { position: absolute; right: 0; top: 28px; width: 12px; border: 1px solid #555a62; border-right: 0; }
.task-tabs button { width: 100%; height: 12px; background: #a9abaf; border-bottom: 1px solid #555a62; }
.task-tabs button:last-child { border-bottom: 0; }
.task-tabs .active { background: #e2e5ea; }

.task { display: flex; flex-direction: column; background: #e2e5ea; border-left: 2px solid #666b74; }
.task h2 { display: flex; align-items: center; height: 9px; margin: 0; padding: 0 1px 0 4px; background: #a8aaae; border-bottom: 1px solid #606469; font-size: 6px; }
.task h2 span { font-size: 9px; font-weight: 400; }
.task h2 strong { flex: 1; text-align: center; font-weight: 700; }
.task-tools { display: flex; align-items: center; gap: 3px; height: 15px; padding: 0 2px; background: linear-gradient(#e5e7eb, #d4d7dc); }
.task .tree { padding: 4px 0 0 3px; height: 114px; border-bottom: 2px solid #8f95a5; }
.hint { height: 31px; margin: 2px 1px 3px 2px; padding: 1px 4px; background: #ffff80; border: 1px solid #55584f; white-space: nowrap; }
.split { display: flex; justify-content: center; gap: 2px; height: 2px; background: #8f95a5; }
.split i { width: 2px; height: 2px; background: #222; }

.sheets { display: flex; height: 9px; flex: none; border-top: 1px solid #5c6066; border-bottom: 1px solid #9a9da2; }
.steps { display: flex; width: 47px; padding-left: 14px; background: linear-gradient(90deg, #eef0f3 13px, #a3a5a9 13px); }
.steps i { width: 8px; border-right: 1px solid #85888d; }
.sheets button { padding: 0 5px; background: #a8aaae; border-right: 1px solid #4b4e53; line-height: 7px; }
.sheets .active { background: #f0f1f3; font-weight: 700; }
.status { display: flex; align-items: center; height: 9px; flex: none; padding: 0 2px 0 1px; background: #d7dadf; }
.status .mode { margin-left: auto; }
.status .unit { margin: 0 6px 0 26px; }
.status .ico { margin-left: 43px; }
```
